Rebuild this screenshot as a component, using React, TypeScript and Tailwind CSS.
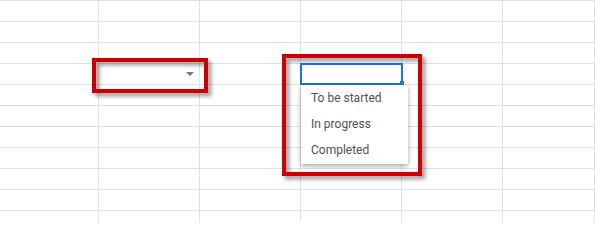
import React from "react";

const COLS = 6;
const ROWS = 11;
const options = ["To be started", "In progress", "Completed"];

function DropArrow() {
  return (
    <svg width="8" height="4" viewBox="0 0 8 4" className="block">
      <path d="M0 0 L8 0 L4 4 Z" fill="#767676" />
    </svg>
  );
}

// open validation list under the active cell
function OpenList() {
  return (
    <>
      <div className="absolute -left-[1px] -top-[1px] z-10 h-[22px] w-[103px] border-2 border-[#1a73e8]" />
      <div className="absolute left-[99px] top-[17px] z-10 h-[4px] w-[4px] bg-[#1a73e8]" />
      <div className="absolute left-0 top-[21px] z-20 w-[107px] bg-white pb-[1px] shadow-[0_2px_5px_rgba(0,0,0,0.35)]">
        {options.map((o) => (
          <div
            key={o}
            className="flex h-[26px] items-center pl-[10px] text-[12px] text-[#505050]"
          >
            {o}
          </div>
        ))}
      </div>
    </>
  );
}

export default function App() {
  return (
    <div
      className="relative h-[222px] w-[595px] overflow-hidden bg-white"
      style={{ fontFamily: "Roboto, 'Noto Sans', Arial, sans-serif" }}
    >
      {/* sheet grid */}
      <div className="grid grid-cols-[99px_101px_101px_101px_101px_1fr] border-t border-[#e2e2e2]">
        {Array.from({ length: ROWS * COLS }).map((_, i) => {
          const row = Math.floor(i / COLS);
          const col = i % COLS;
          return (
            <div
              key={i}
              className="relative flex h-[21px] items-center justify-end border-r border-b border-[#e2e2e2] pr-[5px]"
            >
              {row === 3 && col === 1 && (
                <>
                  <DropArrow />
                  <div className="absolute -left-[7px] -top-[6px] z-30 h-[35px] w-[116px] border-4 border-[#cc0000] drop-shadow-[3px_3px_2px_rgba(0,0,0,0.45)]" />
                </>
              )}
              {row === 3 && col === 3 && (
                <>
                  <OpenList />
                  <div className="absolute -left-[19px] -top-[10px] z-30 h-[122px] w-[140px] border-4 border-[#cc0000] drop-shadow-[3px_3px_2px_rgba(0,0,0,0.45)]" />
                </>
              )}
            </div>
          );
        })}
      </div>
    </div>
  );
}
